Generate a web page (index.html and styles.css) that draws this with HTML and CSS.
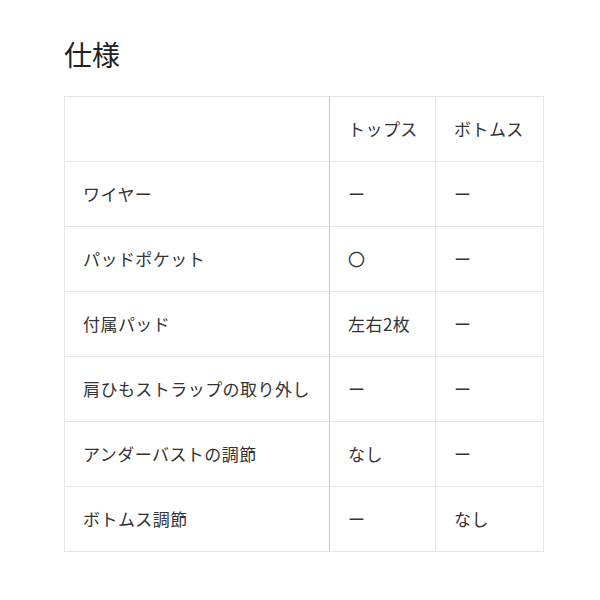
FILE: index.html
```html
<!DOCTYPE html>
<html lang="ja">
<head>
<meta charset="utf-8">
<link rel="stylesheet" href="styles.css">
</head>
<body>
<div class="page">
  <h2 class="title">仕様</h2>
  <table class="spec">
    <colgroup>
      <col class="c1"><col class="c2"><col class="c3">
    </colgroup>
    <thead>
      <tr><th></th><th>トップス</th><th>ボトムス</th></tr>
    </thead>
    <tbody>
      <tr><td>ワイヤー</td><td>ー</td><td>ー</td></tr>
      <tr><td>パッドポケット</td><td>〇</td><td>ー</td></tr>
      <tr><td>付属パッド</td><td>左右2枚</td><td>ー</td></tr>
      <tr><td>肩ひもストラップの取り外し</td><td>ー</td><td>ー</td></tr>
      <tr><td>アンダーバストの調節</td><td>なし</td><td>ー</td></tr>
      <tr><td>ボトムス調節</td><td>ー</td><td>なし</td></tr>
    </tbody>
  </table>
</div>
</body>
</html>
```
FILE: styles.css
```css
html, body {
  margin: 0;
  padding: 0;
  background: #fff;
}
body {
  font-family: "Noto Sans CJK JP", "Noto Sans", sans-serif;
  color: #333;
}
.page {
  padding: 30px 0 0 64px;
}
.title {
  margin: 0 0 18px 0;
  font-size: 28px;
  font-weight: 400;
  line-height: 48px;
  color: #222;
}
.spec {
  border-collapse: collapse;
  width: 479px;
  table-layout: fixed;
  font-size: 17px;
  letter-spacing: 0.45px;
}
.c1 { width: 265px; }
.c2 { width: 106px; }
.c3 { width: 108px; }
.spec th, .spec td {
  border: 1px solid #e6e6e6;
  padding: 17px 0 17px 18px;
  height: 30px;
  line-height: 30px;
  text-align: left;
  font-weight: 400;
  white-space: nowrap;
}
.spec th:first-child, .spec td:first-child {
  border-right: 1px solid #c8c8c8;
}
```
